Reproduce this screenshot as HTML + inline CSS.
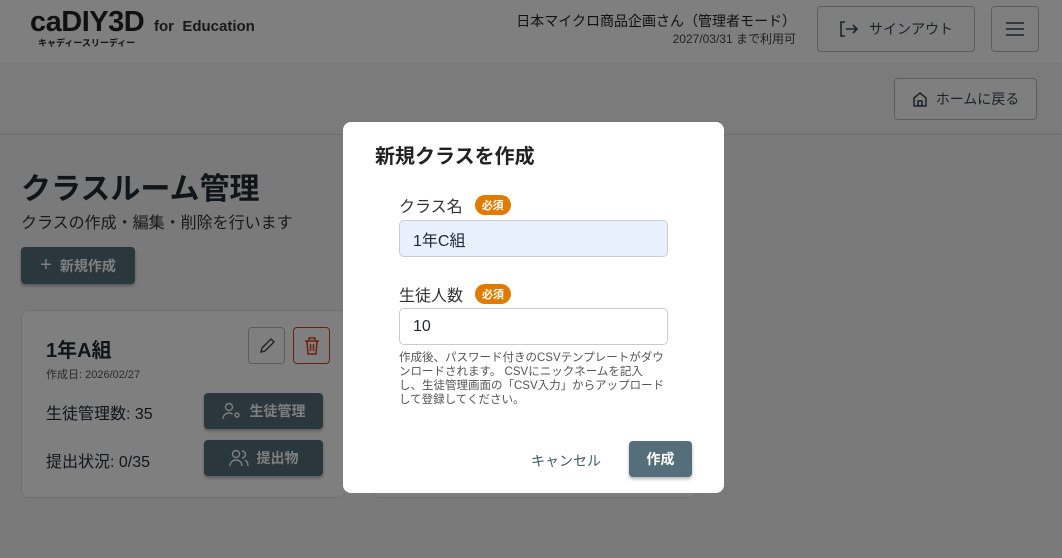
<!DOCTYPE html>
<html><head><meta charset="utf-8"><style>
*{box-sizing:border-box;margin:0;padding:0}
body{width:1062px;height:558px;overflow:hidden;background:#f5f5f5;font-family:"Liberation Sans","Noto Sans CJK JP",sans-serif;color:#1e2a32;position:relative}
.hdr{position:absolute;left:0;top:0;width:1062px;height:62px;background:#fff;box-shadow:0 2px 4px rgba(0,0,0,.15)}
.sub{position:absolute;left:0;top:62px;width:1062px;height:73px;border-bottom:1px solid #ddd;background:#f7f7f7}
.btn-o{position:absolute;border:1px solid #bbb;border-radius:4px;background:#fff;display:flex;align-items:center;justify-content:center;font-size:14px;color:#37474f}
.dark{position:absolute;background:#546e7a;color:#fff;border-radius:4px;display:flex;align-items:center;justify-content:center;font-size:14px;font-weight:bold;box-shadow:0 2px 3px rgba(0,0,0,.3);gap:8px}
.card{position:absolute;background:#fff;border:1px solid #e0e0e0;border-radius:8px}
.ov{position:absolute;left:0;top:0;width:1062px;height:558px;background:rgba(0,0,0,.5)}
.modal{position:absolute;left:343px;top:122px;width:381px;height:371px;background:#fff;border-radius:8px}
.lbl{position:absolute;left:56px;font-size:16px;color:#333;display:flex;align-items:center;gap:12px}
.req{background:#e07b00;color:#fff;font-size:11px;font-weight:bold;border-radius:10px;padding:2px 7px}
.inp{position:absolute;left:56px;width:269px;height:37px;border:1px solid #ccc;border-radius:5px;font-size:16px;padding-left:13px;display:flex;align-items:center}
</style></head><body>
<div class="hdr">
 <div style="position:absolute;left:30px;top:6px;font-size:29px;font-weight:bold;color:#222;letter-spacing:-0.5px">caDIY3D</div>
 <div style="position:absolute;left:154px;top:18px;font-size:15px;font-weight:bold;color:#333">for&nbsp; Education</div>
 <div style="position:absolute;left:38px;top:36px;font-size:9px;font-weight:bold;color:#222">キャディースリーディー</div>
 <div style="position:absolute;right:266px;top:13px;font-size:14px;color:#222;text-align:right;line-height:17px">日本マイクロ商品企画さん（管理者モード）<br><span style="font-size:12px;color:#444">2027/03/31 まで利用可</span></div>
 <div class="btn-o" style="left:817px;top:6px;width:158px;height:46px;gap:10px"><svg width="20" height="18" viewBox="0 0 20 18" fill="none" stroke="#37474f" stroke-width="1.6"><path d="M6 2H2v14h4M7 9h11M14 5l4 4-4 4"/></svg>サインアウト</div>
 <div class="btn-o" style="left:991px;top:6px;width:48px;height:46px"><svg width="18" height="14" stroke="#37474f" stroke-width="1.6"><path d="M0 1h18M0 7h18M0 13h18"/></svg></div>
</div>
<div class="sub"><div class="btn-o" style="left:894px;top:16px;width:143px;height:42px;gap:8px"><svg width="16" height="16" viewBox="0 0 16 16" fill="none" stroke="#37474f" stroke-width="1.5"><path d="M2 7l6-5 6 5v8H2z M6 15v-5h4v5"/></svg>ホームに戻る</div></div>
<div style="position:absolute;left:21px;top:164px;font-size:30px;font-weight:bold;color:#1e2a32">クラスルーム管理</div>
<div style="position:absolute;left:21px;top:209px;font-size:16px;color:#333">クラスの作成・編集・削除を行います</div>
<div class="dark" style="left:21px;top:247px;width:114px;height:37px"><span style="font-size:20px;font-weight:normal">+</span>新規作成</div>
<div class="card" style="left:21px;top:310px;width:325px;height:188px">
 <div style="position:absolute;left:24px;top:23px;font-size:20px;font-weight:bold">1年A組</div>
 <div style="position:absolute;left:24px;top:55px;font-size:11px;color:#555">作成日: 2026/02/27</div>
 <div class="btn-o" style="left:226px;top:16px;width:37px;height:37px"><svg width="18" height="18" viewBox="0 0 18 18" fill="none" stroke="#444" stroke-width="1.4"><path d="M3 15l1-4 9-9 3 3-9 9z"/></svg></div>
 <div class="btn-o" style="left:271px;top:16px;width:37px;height:37px;border-color:#d84315"><svg width="16" height="18" viewBox="0 0 16 18" fill="none" stroke="#d84315" stroke-width="1.5"><path d="M1 4h14M5 4V1h6v3M3 4l1 13h8l1-13M6.5 7v7M9.5 7v7"/></svg></div>
 <div style="position:absolute;left:24px;top:89px;font-size:16px">生徒管理数: 35</div>
 <div style="position:absolute;left:24px;top:137px;font-size:16px">提出状況: 0/35</div>
 <div class="dark" style="left:182px;top:82px;width:119px;height:36px"><svg width="20" height="18" viewBox="0 0 20 18" fill="none" stroke="#fff" stroke-width="1.4"><circle cx="7" cy="5" r="3.5"/><path d="M1 17c0-4 3-6 6-6 1.5 0 2.5.4 3.5 1"/><circle cx="15" cy="13" r="2"/></svg>生徒管理</div>
 <div class="dark" style="left:182px;top:129px;width:119px;height:36px"><svg width="20" height="18" viewBox="0 0 20 18" fill="none" stroke="#fff" stroke-width="1.4"><circle cx="7" cy="5" r="3.5"/><path d="M1 17c0-4 3-6 6-6s6 2 6 6M13 2a3.5 3.5 0 010 7M16 11c2 1 3 3 3 6"/></svg>提出物</div>
</div>
<div class="card" style="left:372px;top:310px;width:325px;height:188px"></div>
<div class="ov"></div>
<div class="modal">
 <div style="position:absolute;left:32px;top:18px;font-size:20px;font-weight:bold;color:#222">新規クラスを作成</div>
 <div class="lbl" style="top:71px">クラス名<span class="req">必須</span></div>
 <div class="inp" style="top:98px;background:#e8f0fe">1年C組</div>
 <div class="lbl" style="top:160px">生徒人数<span class="req">必須</span></div>
 <div class="inp" style="top:186px">10</div>
 <div style="position:absolute;left:56px;top:229px;width:266px;font-size:11.5px;line-height:14px;color:#555">作成後、パスワード付きのCSVテンプレートがダウンロードされます。 CSVにニックネームを記入し、生徒管理画面の「CSV入力」からアップロードして登録してください。</div>
 <div style="position:absolute;left:188px;top:329px;font-size:14px;color:#455a64">キャンセル</div>
 <div class="dark" style="left:286px;top:319px;width:63px;height:36px">作成</div>
</div>
</body></html>
